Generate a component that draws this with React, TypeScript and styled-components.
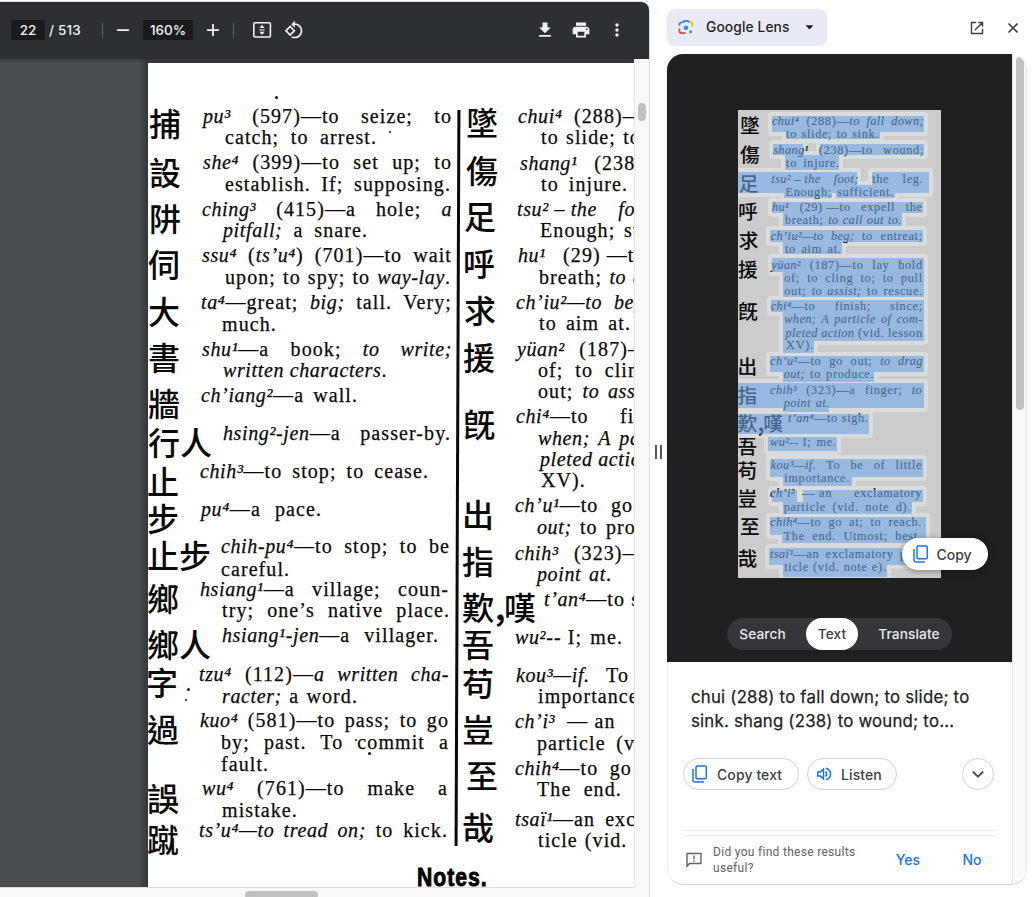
import React from "react";
import styled, { createGlobalStyle } from "styled-components";

const GlobalStyle = createGlobalStyle`
  * { box-sizing: border-box; }
  body { margin: 0; background: #fff; overflow: hidden; font-family: Inter, "Liberation Sans", sans-serif; }
  button { font: inherit; border: 0; background: none; padding: 0; color: inherit; }
`;

/* ---------- dictionary data ---------- */

// [left, right, baseline, text]; *...* marks italics, ~ is a narrow space that does not stretch
type LineData = [number, number, number, string];
type EntryData = { head: string; x: number; mid: number; lines: LineData[] };

const leftEntries: EntryData[] = [
  { head: "捕", x: 149, mid: 124, lines: [[203, 452, 122, "*pu³* (597)—to seize; to"], [225, 377, 143, "catch; to arrest."]] },
  { head: "設", x: 149, mid: 173, lines: [[203, 452, 168, "*she⁴* (399)—to set up; to"], [225, 451, 190, "establish. If; supposing."]] },
  { head: "阱", x: 149, mid: 219, lines: [[202, 452, 215, "*ching³* (415)—a hole; *a*"], [223, 368, 236, "*pitfall;* a snare."]] },
  { head: "伺", x: 148, mid: 265, lines: [[202, 452, 261.5, "*ssu⁴* (*ts’u⁴*) (701)—to wait"], [225, 451, 283, "upon; to spy; to *way-lay*."]] },
  { head: "大", x: 148, mid: 312, lines: [[201, 452, 308, "*ta⁴*—great; *big;* tall. Very;"], [222, 278, 330, "much."]] },
  { head: "書", x: 148, mid: 358, lines: [[202, 452, 355, "*shu¹*—a book; *to write;*"], [223, 387, 376, "*written characters*."]] },
  { head: "牆", x: 148, mid: 404, lines: [[201, 358, 401.5, "*ch’iang²*—a wall."]] },
  { head: "行人", x: 148, mid: 443, lines: [[223, 451, 439, "*hsing²-jen*—a passer-by."]] },
  { head: "止", x: 147, mid: 482, lines: [[200, 429, 477, "*chih³*—to stop; to cease."]] },
  { head: "步", x: 147, mid: 519, lines: [[201, 322, 515.5, "*pu⁴*—a pace."]] },
  { head: "止步", x: 147, mid: 556, lines: [[221, 450, 552.5, "*chih-pu⁴*—to stop; to be"], [221, 292, 575, "careful."]] },
  { head: "鄉", x: 147, mid: 599, lines: [[200, 449, 595.5, "*hsiang¹*—a village; coun-"], [222, 450, 616.5, "try; one’s native place."]] },
  { head: "鄉人", x: 147, mid: 645, lines: [[222, 439, 641.5, "*hsiang¹-jen*—a villager."]] },
  { head: "字", x: 146, mid: 683, lines: [[199, 449, 680, "*tzu⁴* (112)—*a written cha-*"], [222, 358, 702, "*racter;* a word."]] },
  { head: "過", x: 147, mid: 730, lines: [[200, 449, 726.5, "*kuo⁴* (581)—to pass; to go"], [221, 449, 748, "by; past. To commit a"], [221, 271, 770, "fault."]] },
  { head: "誤", x: 147, mid: 799, lines: [[202, 448, 794, "*wu⁴* (761)—to make a"], [222, 302, 816.5, "mistake."]] },
  { head: "蹴", x: 147, mid: 840, lines: [[199, 448, 836, "*ts’u⁴—to tread on;* to kick."]] },
];

const rightEntries: EntryData[] = [
  { head: "墜", x: 466, mid: 123, lines: [[518, 765, 122, "*chui⁴* (288)—*to fall down;*"], [541, 692, 143, "to slide; to sink."]] },
  { head: "傷", x: 466, mid: 171, lines: [[520, 765, 169, "*shang¹* (238)—to wound;"], [541, 628, 190, "to injure."]] },
  { head: "足", x: 464, mid: 217, lines: [[517, 764, 215.5, "*tsu²~–~the foot;* the leg."], [540, 716, 236.5, "Enough; sufficient."]] },
  { head: "呼", x: 463, mid: 264, lines: [[518, 763, 261.5, "*hu¹* (29)~—to expell the"], [539, 729, 283, "breath; *to call out to.*"]] },
  { head: "求", x: 464, mid: 311, lines: [[516, 763, 308, "*ch’iu²—to beg;* to entreat;"], [539, 631, 329.5, "to aim at."]] },
  { head: "援", x: 463, mid: 358, lines: [[517, 763, 355, "*yüan²* (187)—to lay hold"], [538, 763, 376.5, "of; to cling to; to pull"], [538, 763, 397.5, "out; *to assist;* to rescue."]] },
  { head: "旣", x: 463, mid: 425, lines: [[516, 763, 422.5, "*chi⁴*—to finish; since;"], [538, 763, 444, "*when; A particle of com-*"], [540, 763, 465.5, "*pleted action* (vid. lesson"], [541, 587, 486.5, "XV)."]] },
  { head: "出", x: 462, mid: 515, lines: [[515, 763, 511.5, "*ch’u¹*—to go out; *to drag*"], [537, 684, 533, "*out;* to produce."]] },
  { head: "指", x: 462, mid: 562, lines: [[515, 762, 559, "*chih³* (323)—a finger; *to*"], [537, 612, 580, "*point at*."]] },
  { head: "歎，嘆", x: 462, mid: 608, lines: [[544, 675, 605, "*t’an⁴*—to sigh."]] },
  { head: "吾", x: 462, mid: 645, lines: [[515, 623, 643, "*wu²*--~I; me."]] },
  { head: "苟", x: 462, mid: 684, lines: [[516, 762, 681.5, "*kou³—if.* To be of little"], [538, 648, 702.5, "importance."]] },
  { head: "豈", x: 462, mid: 730, lines: [[515, 762, 727, "*ch’i³*~~—~an exclamatory"], [537, 744, 749, "particle (vid. note d)."]] },
  { head: "至", x: 466, mid: 776, lines: [[515, 762, 774, "*chih⁴*—to go at; to reach."], [537, 755, 795.5, "The end. Utmost; best"]] },
  { head: "哉", x: 462, mid: 828, lines: [[515, 762, 825, "*tsaï¹*—an exclamatory par-"], [538, 704, 846.5, "ticle (vid. note e)."]] },
];

const u = (n: number) => `calc(var(--u) * ${n.toFixed(2)})`;
const BASELINE_DROP = 4.9;

const Column = styled.div<{ $unit: number; $width: number }>`
  --u: ${(p) => p.$unit}px;
  flex: none;
  width: ${(p) => u(p.$width)};
  color: #0a0a0a;
  font-family: "Liberation Serif", "Noto Sans CJK TC", serif;
`;
const Entry = styled.div`
  display: flex;
  align-items: flex-start;
`;
const Head = styled.div<{ $x: number; $top: number }>`
  flex: none;
  width: 0;
  height: ${u(34)};
  margin: ${(p) => u(p.$top)} ${(p) => u(-p.$x)} ${(p) => u(-34 - p.$top)} ${(p) => u(p.$x)};
  white-space: nowrap;
  font: 500 ${u(32)} / ${u(34)} "Noto Sans CJK TC", sans-serif;
`;
const HeadComma = styled.span`
  display: inline-block;
  width: ${u(10)};
  font-weight: 700;
  text-indent: ${u(1)};
`;
const Line = styled.div<{ $x: number; $w: number; $h: number }>`
  display: flex;
  align-items: flex-end;
  height: ${(p) => u(p.$h)};
  width: ${(p) => u(p.$w)};
  margin-left: ${(p) => u(p.$x)};
`;
const LineText = styled.div`
  flex: 1;
  font-size: ${u(20)};
  line-height: ${u(22)};
  letter-spacing: ${u(1.08)};
  -webkit-text-stroke: ${u(0.25)} #0a0a0a;
  white-space: nowrap;
  text-align: justify;
  text-align-last: justify;
`;
const Italic = styled.em`
  letter-spacing: ${u(0.62)};
`;

const marked = (s: string) =>
  s
    .replace(/~/g, "\u2005")
    .split("*")
    .map((part, i) => (i % 2 ? <Italic key={i}>{part}</Italic> : part));

function Dictionary({ entries, x0, y0, width, unit = 1 }: {
  entries: EntryData[]; x0: number; y0: number; width: number; unit?: number;
}) {
  let cursor = y0;
  return (
    <Column $unit={unit} $width={width}>
      {entries.map((e, n) => {
        const start = cursor;
        return (
          <Entry key={n}>
            <Head $x={e.x - x0} $top={e.mid - start - 19}>
              {e.head.includes("，") ? <>{e.head[0]}<HeadComma>,</HeadComma>{e.head[2]}</> : e.head}
            </Head>
            <div>
              {e.lines.map(([l, r, base, text], i) => {
                const h = base + BASELINE_DROP - cursor;
                cursor = base + BASELINE_DROP;
                return (
                  <Line key={i} $x={l - x0} $w={r - l} $h={h}>
                    <LineText>{marked(text)}</LineText>
                  </Line>
                );
              })}
            </div>
          </Entry>
        );
      })}
    </Column>
  );
}

/* ---------- PDF viewer ---------- */

const Shell = styled.div`
  display: flex;
  width: 1036px;
  height: 897px;
  overflow: hidden;
`;
const Viewer = styled.section`
  display: flex;
  flex-direction: column;
  width: 650px;
  flex: none;
  margin-top: 1px;
  border-top: 1px solid #dfe3e3;
  border-right: 1px solid #dcdfe0;
  border-top-right-radius: 9px;
  overflow: hidden;
`;
const Toolbar = styled.header`
  display: flex;
  align-items: center;
  height: 57px;
  flex: none;
  padding: 0 22px 1px 11px;
  background: #2d3033;
  color: #f1f1f1;
  font-size: 13.5px;
  font-weight: 500;
`;
const Field = styled.span<{ $w: number; $gap?: number }>`
  flex: none;
  width: ${(p) => p.$w}px;
  height: 20px;
  margin-left: ${(p) => p.$gap ?? 0}px;
  line-height: 20px;
  text-align: center;
  background: #191b1c;
`;
const Total = styled.span`
  margin-left: 4px;
  width: 53px;
  letter-spacing: 0.15px;
  white-space: nowrap;
`;
const Separator = styled.i<{ $gap?: number }>`
  width: 1px;
  height: 15px;
  margin-left: ${(p) => p.$gap ?? 0}px;
  background: #5f6366;
`;
const ToolIcon = styled.svg<{ $gap: number }>`
  flex: none;
  width: 20px;
  height: 20px;
  margin-left: ${(p) => p.$gap}px;
  fill: #f1f1f1;
`;
const Spacer = styled.div`flex: 1;`;
const Body = styled.div`
  display: flex;
  flex: 1;
  min-height: 0;
`;
const Canvas = styled.div`
  width: 634px;
  height: 829px;
  padding: 4px 0 0 148px;
  overflow: hidden;
  background: linear-gradient(90deg, transparent 138px, #33373a 148px), linear-gradient(#3c4043, #4a4e51 5px);
  border-bottom: 1px solid #dcdcdc;
`;
const Sheet = styled.article`
  position: relative;
  width: 640px;
  height: 840px;
  overflow: hidden;
  background: #fff;
`;
const Columns = styled.div`
  display: flex;
  padding-top: 33.3px;
  height: 793px;
`;
const Rule = styled.i`
  flex: none;
  width: 3px;
  height: 736px;
  margin: 14px 3px 0 0;
  background: #0a0a0a;
  transform: rotate(0.22deg);
`;
const Speck = styled.i<{ $x: number; $y: number; $s: number }>`
  position: absolute;
  left: ${(p) => p.$x}px;
  top: ${(p) => p.$y}px;
  width: ${(p) => p.$s}px;
  height: ${(p) => p.$s}px;
  border-radius: 50%;
  background: #111;
`;
const NotesHeading = styled.h2`
  margin: 7px 0 0 269px;
  width: 90px;
  font: bold 25.5px/28px "Liberation Sans", sans-serif;
  letter-spacing: 1.2px;
  -webkit-text-stroke: 0.9px #000;
  color: #000;
  transform: scaleX(0.83);
  transform-origin: left;
`;
const VTrack = styled.div`
  width: 15px;
  background: #f9f9f9;
  border-left: 1px solid #e6e6e6;
  padding: 44px 0 0 3px;
`;
const VThumb = styled.div<{ $h: number }>`
  width: 8px;
  height: ${(p) => p.$h}px;
  border-radius: 4px;
  background: #c1c1c1;
`;
const HTrack = styled.div`
  height: 9px;
  flex: none;
  padding: 3px 0 0 245px;
  background: #f9f9f9;
`;
const HThumb = styled.div`
  width: 73px;
  height: 8px;
  border-radius: 4px;
  background: #c1c1c1;
`;

function PdfViewer() {
  return (
    <Viewer>
      <Toolbar>
        <Field $w={34}>22</Field>
        <Total>/ 513</Total>
        <Separator />
        <ToolIcon $gap={10} viewBox="0 0 20 20"><path d="M4 9.2h12v1.7H4z" /></ToolIcon>
        <Field $w={50} $gap={10}>160%</Field>
        <ToolIcon $gap={10} viewBox="0 0 20 20"><path d="M4 9.2h5.1V4h1.8v5.2H16v1.7h-5.1V16H9.1v-5.1H4z" /></ToolIcon>
        <Separator $gap={10} />
        <ToolIcon $gap={18} viewBox="0 0 20 20">
          <rect x="1.8" y="2.8" width="16.6" height="14.2" rx="1.2" fill="none" stroke="#f1f1f1" strokeWidth="1.6" />
          <path d="M10 4.8l2.6 3.2H7.4zM10 15l2.6-3.2H7.4zM7.4 9.4h5.2v1H7.4z" />
        </ToolIcon>
        <ToolIcon $gap={12} viewBox="0 0 24 24">
          <path d="M7.34 6.41L.86 12.9l6.49 6.48 6.49-6.48-6.5-6.49zM3.69 12.9l3.66-3.66L11 12.9l-3.66 3.66-3.65-3.66zm15.67-6.26C17.61 4.88 15.3 4 13 4V.76L8.76 5 13 9.24V6c1.79 0 3.58.68 4.95 2.05 2.73 2.73 2.73 7.17 0 9.9C16.58 19.32 14.79 20 13 20c-.97 0-1.94-.21-2.84-.61l-1.49 1.49C10.02 21.62 11.51 22 13 22c2.3 0 4.61-.88 6.36-2.64 3.52-3.51 3.52-9.21 0-12.72z" />
        </ToolIcon>
        <Spacer />
        <ToolIcon $gap={0} viewBox="0 0 24 24"><path d="M19 9h-4V3H9v6H5l7 7 7-7zM5 18v2h14v-2H5z" /></ToolIcon>
        <ToolIcon $gap={16} viewBox="0 0 24 24">
          <path d="M19 8H5c-1.66 0-3 1.34-3 3v6h4v4h12v-4h4v-6c0-1.66-1.34-3-3-3zm-3 11H8v-5h8v5zm3-7c-.55 0-1-.45-1-1s.45-1 1-1 1 .45 1 1-.45 1-1 1zm-1-9H6v4h12V3z" />
        </ToolIcon>
        <ToolIcon $gap={16} viewBox="0 0 24 24">
          <path d="M12 8c1.1 0 2-.9 2-2s-.9-2-2-2-2 .9-2 2 .9 2 2 2zm0 2c-1.1 0-2 .9-2 2s.9 2 2 2 2-.9 2-2-.9-2-2-2zm0 6c-1.1 0-2 .9-2 2s.9 2 2 2 2-.9 2-2-.9-2-2-2z" />
        </ToolIcon>
      </Toolbar>
      <Body>
        <Canvas>
          <Sheet>
            <Columns>
              <Dictionary entries={leftEntries} x0={148} y0={96.3} width={308} />
              <Rule />
              <Dictionary entries={rightEntries} x0={462} y0={96.3} width={330} />
            </Columns>
            <NotesHeading>Notes.</NotesHeading>
            <Speck $x={127} $y={33} $s={3} />
            <Speck $x={241} $y={68} $s={2} />
            <Speck $x={39} $y={625} $s={3} />
            <Speck $x={37} $y={636} $s={2} />
            <Speck $x={207} $y={676} $s={2} />
            <Speck $x={220} $y={689} $s={3} />
          </Sheet>
        </Canvas>
        <VTrack><VThumb $h={18} /></VTrack>
      </Body>
      <HTrack><HThumb /></HTrack>
    </Viewer>
  );
}

/* ---------- Lens side panel ---------- */

const Handle = styled.div`
  display: flex;
  gap: 3px;
  align-self: flex-start;
  margin: 445px 0 0 5px;
  width: 12px;
  height: 14px;
`;
const Grip = styled.i`
  width: 2px;
  background: #55575a;
`;
const Side = styled.aside`
  width: 360px;
  padding-top: 9px;
`;
const SideHeader = styled.header`
  display: flex;
  align-items: center;
  height: 37px;
  margin-bottom: 8px;
`;
const LensButton = styled.button`
  display: flex;
  align-items: center;
  width: 160px;
  height: 37px;
  padding: 0 0 1px 11px;
  border-radius: 8px;
  background: #e8ebf5;
  color: #1f1f1f;
  font-size: 13.8px;
  font-weight: 500;
  letter-spacing: 0.1px;
  white-space: nowrap;
`;
const LensLabel = styled.span`margin: 0 15px 0 12px;`;
const HeaderIcon = styled.svg<{ $gap: number }>`
  width: 16px;
  height: 16px;
  margin: 1px 0 0 ${(p) => p.$gap}px;
`;
const Panel = styled.div`
  display: flex;
  height: 831px;
  border-radius: 16px;
  overflow: hidden;
  border-right: 1px solid #e8e8ea;
  border-bottom: 1px solid #c6d8f7;
  background: #fff;
`;
const PanelMain = styled.div`
  width: 345px;
  flex: none;
  box-shadow: inset 1px 0 #f0f0f0;
`;
const PanelTrack = styled.div`
  width: 15px;
  padding: 3px 0 0 3px;
  background: #f9f9f9;
  border-left: 1px solid #e6e6e6;
`;
const Preview = styled.div`
  display: flex;
  flex-direction: column;
  align-items: center;
  height: 608px;
  padding: 56px 0 12px;
  background: #1f2022;
`;
const Shot = styled.div`
  position: relative;
  width: 203px;
  height: 468px;
  margin-left: -1px;
  flex: none;
`;
const ShotPage = styled.div`
  position: relative;
  height: 468px;
  overflow: hidden;
  background: #ccc;
`;
const ShotText = styled.div`position: relative;`;
const Overlay = styled.div<{ $opacity: number }>`
  position: absolute;
  inset: 0;
  opacity: ${(p) => p.$opacity};
`;
const Mark = styled.i<{ $r: number[]; $halo?: boolean }>`
  position: absolute;
  left: ${(p) => p.$r[0]}px;
  top: ${(p) => p.$r[1]}px;
  width: ${(p) => p.$r[2] - p.$r[0]}px;
  height: ${(p) => p.$r[3] - p.$r[1]}px;
  background: ${(p) => (p.$halo ? "#dedede" : "#6da4e3")};
  ${(p) => p.$halo && "box-shadow: 0 0 0 4px #dedede; border-radius: 1px;"}
`;
const CopyPill = styled.button`
  position: absolute;
  left: 164px;
  top: 428px;
  display: flex;
  align-items: center;
  gap: 5px;
  width: 86px;
  height: 32px;
  padding-left: 10px;
  border-radius: 16px;
  background: #fff;
  color: #3c4043;
  font-size: 14px;
  font-weight: 500;
  box-shadow: 0 1px 6px rgba(0, 0, 0, 0.4);
`;
const Tabs = styled.nav`
  display: flex;
  align-items: center;
  justify-content: space-between;
  width: 225px;
  height: 32px;
  margin-top: auto;
  border-radius: 16px;
  background: #35363a;
`;
const Tab = styled.button<{ $w: number; $on?: boolean }>`
  width: ${(p) => p.$w}px;
  height: 32px;
  border-radius: 16px;
  background: ${(p) => (p.$on ? "#fff" : "transparent")};
  color: ${(p) => (p.$on ? "#3c4043" : "#e8eaed")};
  font-size: 13.7px;
  font-weight: 500;
  letter-spacing: 0.1px;
  text-align: center;
`;
const Extract = styled.p`
  margin: 23px 0 25px 24px;
  height: 48px;
  font-size: 16.8px;
  line-height: 24px;
  letter-spacing: 0.22px;
  -webkit-text-stroke: 0.25px #202124;
  color: #202124;
  white-space: nowrap;
`;
const Actions = styled.div`
  display: flex;
  gap: 8px;
  padding: 0 18px 0 16px;
`;
const Chip = styled.button<{ $w: number; $pad?: number; $gap?: number }>`
  display: flex;
  align-items: center;
  gap: ${(p) => p.$gap ?? 9}px;
  width: ${(p) => p.$w}px;
  height: 32px;
  padding-left: ${(p) => p.$pad ?? 8}px;
  border: 1px solid #d2d4d8;
  border-radius: 16px;
  color: #3c4043;
  font-size: 14px;
  font-weight: 500;
  letter-spacing: 0.1px;
  white-space: nowrap;
`;
const Round = styled(Chip)`
  margin-left: auto;
  padding: 0;
  justify-content: center;
`;
const Dividers = styled.div`
  height: 6px;
  margin: 40px 16px 0;
  border: solid #eceded;
  border-width: 1px 0;
`;
const Feedback = styled.div`
  display: flex;
  align-items: center;
  margin-top: 8px;
  padding-left: 19px;
  height: 32px;
  color: #5f6368;
  font: 12px/16px Roboto, sans-serif;
  letter-spacing: 0.3px;
`;
const Question = styled.span`
  width: 168px;
  margin-left: 11px;
`;
const Answer = styled.button<{ $w: number }>`
  width: ${(p) => p.$w}px;
  padding-bottom: 1px;
  color: #1a73e8;
  font: 500 14px Inter, sans-serif;
  letter-spacing: 0;
  text-align: center;
`;

// highlight boxes inside the preview, [x1, y1, x2, y2]
const marks = [
  [34, 6, 186, 22], [48, 19, 142, 29], [35, 34, 65, 45], [82, 34, 186, 45], [47, 45, 101, 60],
  [0, 62, 119, 83], [134, 62, 191, 83], [0, 75, 191, 83], [46, 77, 94, 88], [98, 77, 157, 88],
  [34, 92, 185, 103], [45, 103, 164, 116], [32, 120, 185, 132], [45, 132, 104, 144],
  [34, 148, 186, 162], [45, 162, 186, 187], [33, 190, 186, 202], [45, 202, 186, 231], [45, 231, 76, 243],
  [32, 246, 186, 262], [45, 262, 136, 272], [0, 273, 186, 298], [45, 290, 91, 302], [0, 304, 131, 324],
  [30, 327, 99, 341], [32, 349, 185, 367], [45, 365, 114, 376], [34, 380, 59, 392], [65, 380, 185, 392],
  [45, 392, 174, 404], [32, 407, 188, 425], [44, 422, 188, 433], [31, 438, 186, 455], [45, 453, 149, 467],
];

const CopyIcon = () => (
  <svg width="20" height="20" viewBox="0 0 20 20" fill="none" stroke="#1a73e8" strokeWidth="1.5">
    <rect x="5" y="2" width="10.3" height="12.8" rx="1.2" />
    <path d="M2 5v11.6c0 .8.6 1.4 1.4 1.4H13" />
  </svg>
);

function LensPanel() {
  return (
    <Side>
      <SideHeader>
        <LensButton>
          <svg width="16" height="16" viewBox="0 0 16 16" fill="none" strokeWidth="1.8">
            <path d="M1.4 6.8V5.8Q1.4 3.4 3.8 3.4H5l1-1.4h4l1 1.4" stroke="#4285f4" />
            <path d="M11.2 3.2h.8Q14.2 3.2 14.2 5.6V7.6" stroke="#fbbc04" />
            <path d="M1.4 9.4v2.4Q1.4 14.2 3.8 14.2H7.6" stroke="#ea4335" />
            <circle cx="7.9" cy="8.8" r="2.3" fill="#4285f4" />
            <circle cx="12.6" cy="12.8" r="1.5" fill="#34a853" />
          </svg>
          <LensLabel>Google Lens</LensLabel>
          <svg width="9" height="5" viewBox="0 0 9 5"><path d="M.5.3h8L4.5 4.5z" fill="#1f1f1f" /></svg>
        </LensButton>
        <HeaderIcon $gap={142} viewBox="0 0 16 16" fill="none" stroke="#3c3e40" strokeWidth="1.4">
          <path d="M7.2 2.5H2.5v11h11V8.8M9.3 2.5h4.2v4.2M13.3 2.7L6 10" />
        </HeaderIcon>
        <HeaderIcon $gap={20} viewBox="0 0 16 16" fill="none" stroke="#3c3e40" strokeWidth="1.6">
          <path d="M3.5 3.5l9 9M12.5 3.5l-9 9" />
        </HeaderIcon>
      </SideHeader>
      <Panel>
        <PanelMain>
          <Preview>
            <Shot>
              <ShotPage>
                <Overlay $opacity={0.85}>{marks.map((m, i) => <Mark key={i} $r={m} $halo />)}</Overlay>
                <ShotText><Dictionary entries={rightEntries} x0={462} y0={96.3} width={330} unit={0.6155} /></ShotText>
                <Overlay $opacity={0.6}>{marks.map((m, i) => <Mark key={i} $r={m} />)}</Overlay>
              </ShotPage>
              <CopyPill><CopyIcon />Copy</CopyPill>
            </Shot>
            <Tabs>
              <Tab $w={71}>Search</Tab>
              <Tab $w={52} $on>Text</Tab>
              <Tab $w={86}>Translate</Tab>
            </Tabs>
          </Preview>
          <Extract>
            chui (288) to fall down; to slide; to<br />sink. shang (238) to wound; to...
          </Extract>
          <Actions>
            <Chip $w={116} $pad={6.5} $gap={6.5}><CopyIcon />Copy text</Chip>
            <Chip $w={90}>
              <svg width="16" height="16" viewBox="0 0 16 16" fill="none" stroke="#1a73e8" strokeWidth="1.5">
                <path d="M1.8 5.9v4.2h2.6l3.1 2.8V3.1L4.4 5.9z" />
                <path d="M9.6 5.4q2.2 2.6 0 5.2M10 2.2q4.6 1.6 4.6 5.8t-4.6 5.8" />
              </svg>
              Listen
            </Chip>
            <Round $w={32}>
              <svg width="14" height="14" viewBox="0 0 14 14" fill="none" stroke="#4a4d51" strokeWidth="1.8"><path d="M1.8 4.5L7 9.7l5.2-5.2" /></svg>
            </Round>
          </Actions>
          <Dividers />
          <Feedback>
            <svg width="16" height="16" viewBox="0 0 16 16" fill="none" stroke="#5f6368" strokeWidth="1.4">
              <path d="M1 14.2V1.5h14v10H3.6zM8 3.6v3.6M8 8.3v1.5" />
            </svg>
            <Question>Did you find these results useful?</Question>
            <Answer $w={54}>Yes</Answer>
            <Answer $w={74}>No</Answer>
          </Feedback>
        </PanelMain>
        <PanelTrack><VThumb $h={353} /></PanelTrack>
      </Panel>
    </Side>
  );
}

export default function App() {
  return (
    <Shell>
      <GlobalStyle />
      <PdfViewer />
      <Handle><Grip /><Grip /></Handle>
      <LensPanel />
    </Shell>
  );
}
